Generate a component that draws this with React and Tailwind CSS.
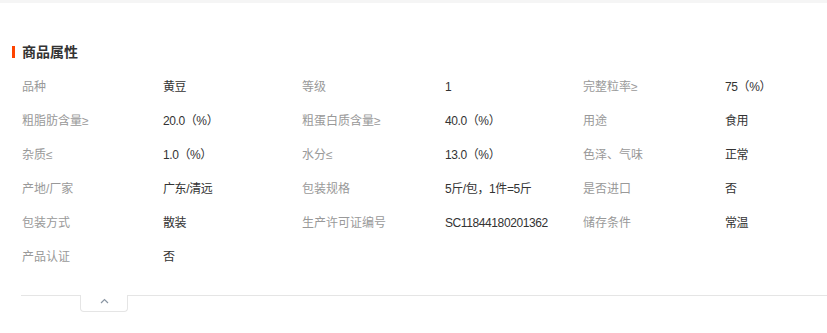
import React from "react";

const rows = [
  [["品种", "黄豆"], ["等级", "1"], ["完整粒率≥", "75（%）"]],
  [["粗脂肪含量≥", "20.0（%）"], ["粗蛋白质含量≥", "40.0（%）"], ["用途", "食用"]],
  [["杂质≤", "1.0（%）"], ["水分≤", "13.0（%）"], ["色泽、气味", "正常"]],
  [["产地/厂家", "广东/清远"], ["包装规格", "5斤/包，1件=5斤"], ["是否进口", "否"]],
  [["包装方式", "散装"], ["生产许可证编号", "SC11844180201362"], ["储存条件", "常温"]],
  [["产品认证", "否"]],
];

export default function App() {
  const font = { fontFamily: '"Liberation Sans", "Noto Sans CJK SC", sans-serif' };
  return (
    <div className="w-[827px] h-[333px] bg-white overflow-hidden" style={font}>
      <div className="h-[3px] bg-[#f5f5f5]" />
      <div className="pt-[39px] flex items-center h-[59px]">
        <div className="ml-[12px] w-[3px] h-[12px] bg-[#ff4400]" />
        <div className="ml-[7px] text-[14px] font-bold text-[#333] leading-[20px]">商品属性</div>
      </div>
      <div className="pl-[22px] mt-[8px] grid grid-cols-[141px_139px_143px_138px_142px_1fr] text-[12px]">
        {rows.map((r, i) =>
          [0, 1, 2].map((j) => {
            const p = r[j];
            return (
              <React.Fragment key={i + "-" + j}>
                <div className="h-[34px] flex items-center text-[#999] whitespace-nowrap">{p ? p[0] : ""}</div>
                <div className="h-[34px] flex items-center text-[#333] whitespace-nowrap tracking-[-0.4px]">{p ? p[1] : ""}</div>
              </React.Fragment>
            );
          })
        )}
      </div>
      <div className="mt-[21px] ml-[21px] border-t border-[#e5e5e5] relative">
        <div className="absolute left-[59px] top-[-1px] w-[48px] h-[17px] bg-white border border-t-0 border-[#e5e5e5] rounded-b-[4px] flex justify-center pt-[3px]">
          <svg width="9" height="6" viewBox="0 0 9 6" fill="none">
            <path d="M1 5 L4.5 1.5 L8 5" stroke="#8a96a3" strokeWidth="1.2" />
          </svg>
        </div>
      </div>
    </div>
  );
}
